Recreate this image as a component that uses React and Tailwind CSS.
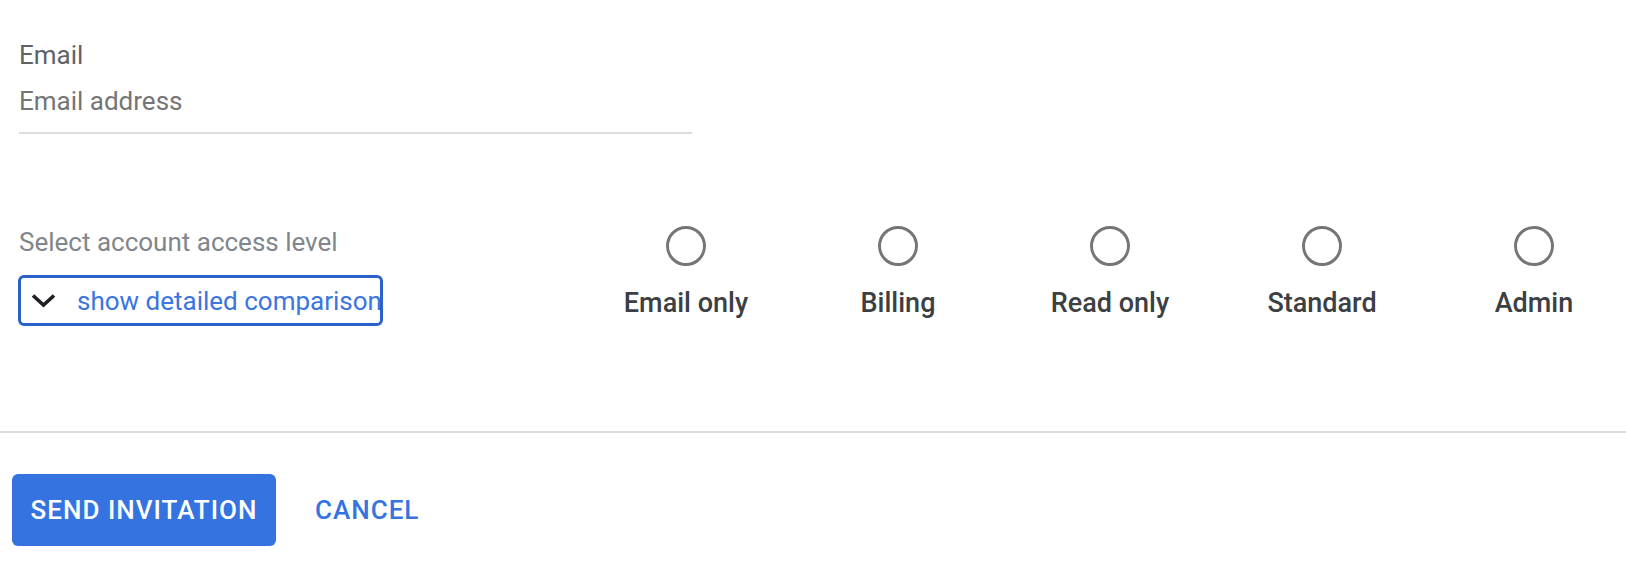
import React from 'react';

const levels = ['Email only', 'Billing', 'Read only', 'Standard', 'Admin'];

const RadioOption = ({ label }) => (
  <label className="w-[212px] shrink-0 flex flex-col items-center cursor-pointer">
    <span className="w-[40px] h-[40px] rounded-full border-[3px] border-[#757575]" />
    <span className="mt-[22px] text-[27px] leading-[30px] font-medium text-[#3c4043]">{label}</span>
  </label>
);

const App = () => {
  return (
    <div className="w-full h-[584px] overflow-hidden bg-white font-['Roboto',_'Liberation_Sans',_sans-serif]">
      {/* Email field */}
      <div className="pl-[19px] pt-[40px]">
        <div className="text-[26px] leading-[30px] text-[#5f6368]">Email</div>
        <div className="mt-[16px] w-[673px] pb-[16px] border-b-2 border-[#dcdcdc] text-[26px] leading-[30px] text-[#757575]">
          Email address
        </div>
      </div>

      {/* Access level */}
      <div className="flex mt-[92px]">
        <div className="w-[580px] shrink-0 pl-[18px] pt-px">
          <div className="pl-[1px] text-[26px] leading-[30px] text-[#80868b]">Select account access level</div>
          <button className="mt-[18px] w-[365px] h-[51px] flex items-center overflow-hidden whitespace-nowrap border-[3px] border-[#2b62c9] rounded-[6px] pl-[10px]">
            <svg width="25" height="15" viewBox="0 0 25 15" className="shrink-0">
              <polyline points="2,2.5 12.5,12 23,2.5" fill="none" stroke="#202124" strokeWidth="3.6" />
            </svg>
            <span className="ml-[21px] text-[26px] leading-[30px] text-[#3a75e0]">show detailed comparison</span>
          </button>
        </div>
        <div className="flex shrink-0">
          {levels.map((l) => (
            <RadioOption key={l} label={l} />
          ))}
        </div>
      </div>

      <div className="mt-[105px] border-t-2 border-[#dadce0]" />

      {/* Actions */}
      <div className="flex items-center pl-[12px] mt-[41px]">
        <button className="w-[264px] h-[72px] rounded-[6px] bg-[#3574e0] text-white text-[26px] font-medium tracking-[1px]">
          SEND INVITATION
        </button>
        <button className="ml-[39px] text-[26px] font-medium tracking-[1px] text-[#3574e0]">CANCEL</button>
      </div>
    </div>
  );
};

export default App;
